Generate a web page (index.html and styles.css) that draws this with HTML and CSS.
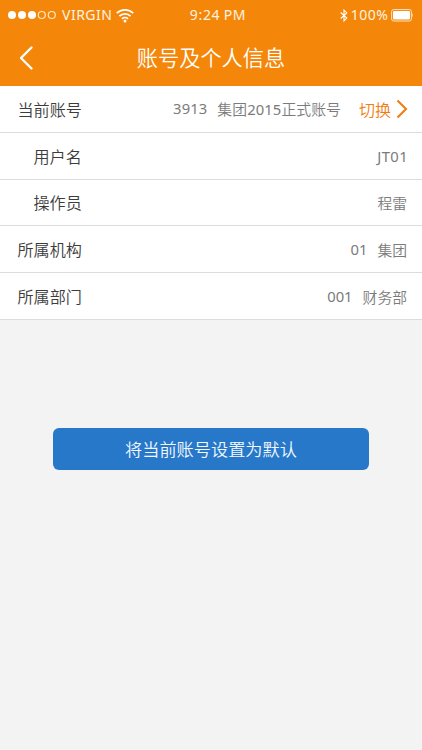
FILE: index.html
```html
<!DOCTYPE html>
<html lang="zh-CN">
<head>
<meta charset="utf-8">
<meta name="viewport" content="width=device-width, initial-scale=1">
<title>账号及个人信息</title>
<link rel="stylesheet" href="styles.css">
</head>
<body>
<header class="header">
  <div class="status">
    <div class="status-left">
      <svg class="dots" width="48" height="10" viewBox="0 0 48 10"><g fill="#fff"><circle cx="4" cy="5" r="4"/><circle cx="14" cy="5" r="4"/><circle cx="24" cy="5" r="4"/></g><g fill="none" stroke="#ffe9c9" stroke-width="1.2"><circle cx="33.8" cy="5" r="3.5"/><circle cx="43.8" cy="5" r="3.5"/></g></svg>
      <span class="carrier">VIRGIN</span>
      <svg class="wifi" width="18" height="15" viewBox="0 0 18 15"><g fill="none" stroke="#fff" stroke-width="1.8"><path d="M.8 5.2a11.8 11.8 0 0 1 16.4 0"/><path d="M3.4 8.1a8 8 0 0 1 11.2 0"/><path d="M6 10.8a4.3 4.3 0 0 1 6 0"/></g><circle cx="9" cy="13" r="1.5" fill="#fff"/></svg>
    </div>
    <span class="time">9:24 PM</span>
    <div class="status-right">
      <svg class="bluetooth" width="8" height="13" viewBox="0 0 8 13"><path d="M.7 3.5l6.1 5.6L4 11.9V1.1l2.8 2.8L.7 9.5" fill="none" stroke="#fff" stroke-width="1.1"/></svg>
      <span class="percent">100%</span>
      <svg class="battery" width="23" height="13" viewBox="0 0 23 13"><rect x=".6" y=".6" width="19.8" height="11.4" rx="2" fill="none" stroke="#ffe3bd"/><rect x="2" y="2" width="17" height="8.6" rx="1" fill="#fff"/><path d="M21.3 4q1.5 2.3 0 4.600z" fill="#fff"/></svg>
    </div>
  </div>
  <div class="navbar">
    <svg class="back" width="15" height="26" viewBox="0 0 15 26"><path d="M12.500 2.500L2 13l10.500 10.500" fill="none" stroke="#fff" stroke-width="2.400" stroke-linecap="round" stroke-linejoin="round"/></svg>
    <h1 class="title">账号及个人信息</h1>
  </div>
</header>
<main>
  <dl class="list">
    <div class="row"><dt>当前账号</dt><dd class="account"><span>3913</span><span>集团2015正式账号</span></dd>
      <dd class="switch">切换<svg class="chevron" width="12" height="20" viewBox="0 0 12 20"><path d="M1.500 1.500l8.500 8.500-8.500 8.500" fill="none" stroke="#ef7e12" stroke-width="2.100"/></svg></dd></div>
    <div class="row sub"><dt>用户名</dt><dd class="user"><span>JT01</span></dd></div>
    <div class="row sub"><dt>操作员</dt><dd><span>程雷</span></dd></div>
    <div class="row"><dt>所属机构</dt><dd><span>01</span><span>集团</span></dd></div>
    <div class="row"><dt>所属部门</dt><dd><span>001</span><span>财务部</span></dd></div>
  </dl>
  <button class="primary" type="button">将当前账号设置为默认</button>
</main>
</body>
</html>
```
FILE: styles.css
```css
* { box-sizing: border-box; }
body {
  margin: 0;
  min-height: 750px;
  background: #f3f3f3;
  font-family: "Noto Sans", "Noto Sans CJK SC DemiLight", "Noto Sans CJK SC", sans-serif;
  color: #3c3c3c;
}
svg { display: block; flex: none; }
.header { height: 86px; background: #f4870a; color: #fff; }
.status {
  display: grid;
  grid-template-columns: 1fr auto 1fr;
  align-items: center;
  height: 30px;
  padding: 0 8px;
  font-size: 14px;
  line-height: 30px;
  color: #fff3e0;
  white-space: nowrap;
}
.status-left, .status-right { display: flex; align-items: center; }
.status-right { justify-content: flex-end; }
.carrier { margin-left: 6px; letter-spacing: 0.5px; }
.wifi { margin-left: 4px; }
.time { margin-left: 14px; letter-spacing: 0.7px; word-spacing: -1px; }
.percent { margin: 0 2.5px 0 3px; letter-spacing: 0.5px; }
.navbar {
  display: grid;
  grid-template-columns: 40px 1fr 40px;
  align-items: center;
  height: 56px;
}
.back { margin-left: 19px; }
.title {
  margin: 0;
  font-size: 21.2px;
  line-height: 56px;
  font-weight: 300;
  text-align: center;
}
.list { margin: 0; background: #fff; }
.row {
  display: flex;
  align-items: center;
  height: 46.8px;
  padding: 0 15px 0 17.5px;
  border-bottom: 1px solid #dcdcdc;
  font-size: 16.1px;
}
.sub { padding-left: 33.5px; }
.row dd {
  display: flex;
  gap: 10px;
  margin: 0 0 0 auto;
  font-size: 14.8px;
  color: #7b7b7b;
  white-space: nowrap;
}
.row .user { margin-right: -1px; letter-spacing: 0.4px; }
.row .account { letter-spacing: 0.1px; }
.row .switch {
  align-items: center;
  gap: 5px;
  margin: 0 -1px 0 18px;
  font-size: 16px;
  color: #ef7e12;
}
.primary {
  display: block;
  width: 316px;
  height: 42px;
  margin: 108.500px auto 0;
  padding: 0 0 2px;
  border: 0;
  border-radius: 6px;
  background: #2878ca;
  color: #f2f8ff;
  font-family: inherit;
  font-size: 17.2px;
  font-weight: 300;
}
```
